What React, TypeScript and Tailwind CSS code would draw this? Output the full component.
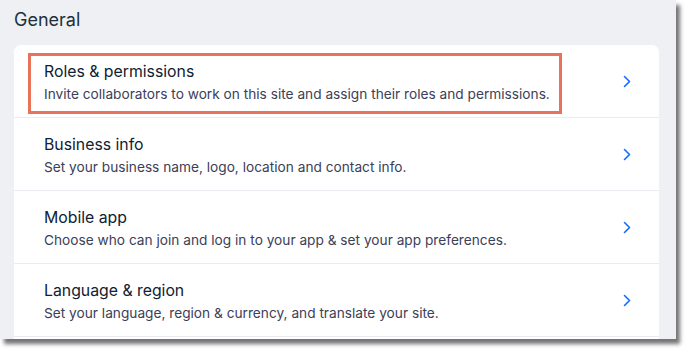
import React from "react";

const rows = [
  { title: "Roles & permissions", desc: "Invite collaborators to work on this site and assign their roles and permissions." },
  { title: "Business info", desc: "Set your business name, logo, location and contact info." },
  { title: "Mobile app", desc: "Choose who can join and log in to your app & set your app preferences." },
  { title: "Language & region", desc: "Set your language, region & currency, and translate your site." },
  { title: "", desc: "" },
];

function Chevron() {
  return (
    <svg width="8" height="13" viewBox="0 0 8 13" fill="none">
      <path d="M1.5 1.5L6.5 6.5L1.5 11.5" stroke="#116dff" strokeWidth="1.6" strokeLinecap="round" strokeLinejoin="round" />
    </svg>
  );
}

export default function App() {
  return (
    <div className="w-[691px] h-[356px] bg-white" style={{ fontFamily: "Inter, 'Noto Sans', sans-serif" }}>
      <div className="w-[676px] h-[339px] bg-[#eef0f4] overflow-hidden shadow-[4px_5px_4px_rgba(0,0,0,0.55)] flex flex-col">
        <div className="shrink-0 pl-[14px] pt-[8px] h-[45px] text-[18px] leading-[24px] text-[#20303c]">General</div>
        <div className="shrink-0 ml-[14px] w-[645px] bg-white rounded-t-[7px] flex flex-col">
          {rows.map((r, i) => (
            <div key={i} className="relative h-[73px] shrink-0 border-b border-[#e8ebf0] flex items-center pl-[30px] pr-[28px]">
              <div className="flex-1 flex flex-col pt-[3px] gap-[2px]">
                <div className="text-[15.8px] leading-[20px] text-[#0f2132]">{r.title}</div>
                <div className="text-[13.7px] leading-[20px] text-[#3b4057]">{r.desc}</div>
              </div>
              {r.title && <Chevron />}
              {i === 0 && (
                <div className="absolute left-[14px] top-[8px] w-[534px] h-[61px] border-[3px] border-[#e8735a]" />
              )}
            </div>
          ))}
        </div>
      </div>
    </div>
  );
}
